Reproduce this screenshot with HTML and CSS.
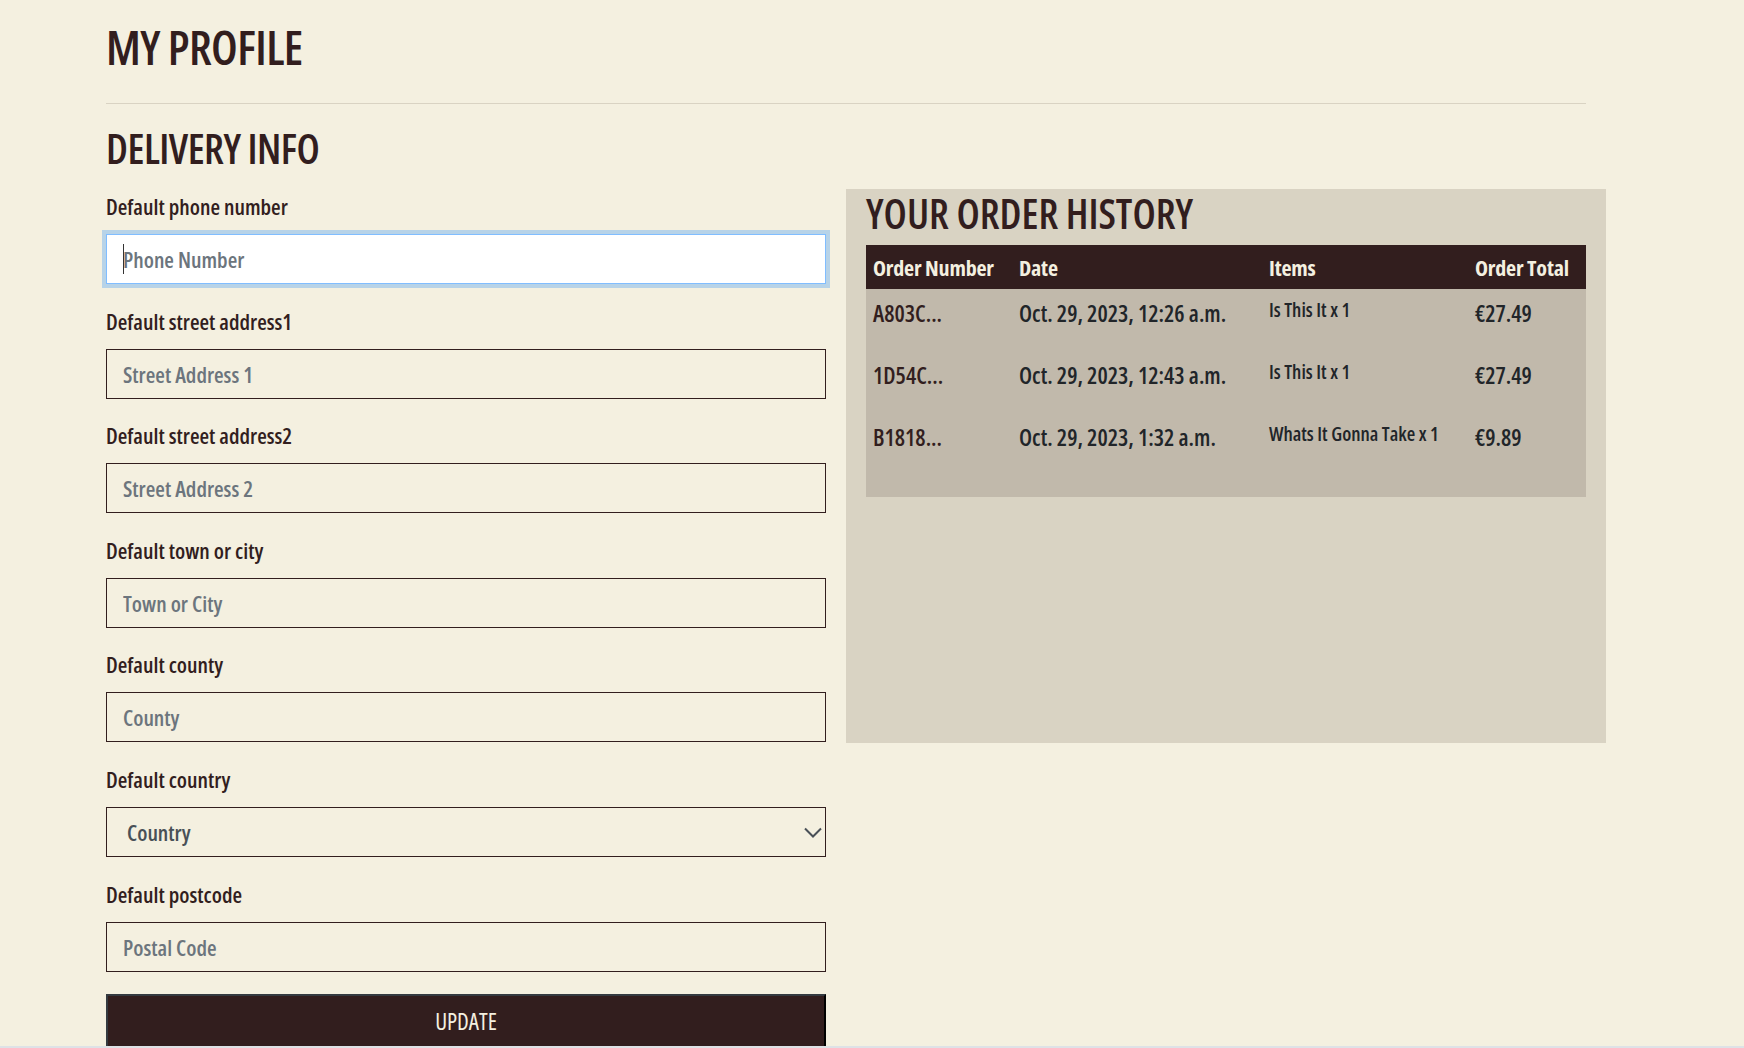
FILE: index.html
```html
<!DOCTYPE html>
<html lang="en">
<head>
<meta charset="utf-8">
<title>My Profile</title>
<link rel="stylesheet" href="styles.css">
</head>
<body>
<main class="page">
  <h1 class="title">MY PROFILE</h1>
  <hr class="rule">
  <h2 class="section-title">DELIVERY INFO</h2>
  <div class="row">
    <form class="delivery">
      <div class="field">
        <label class="label" for="phone">Default phone number</label>
        <div class="input-wrap">
          <input class="input is-focused" id="phone" placeholder="Phone Number">
          <span class="caret"></span>
        </div>
      </div>
      <div class="field">
        <label class="label" for="s1">Default street address1</label>
        <input class="input" id="s1" placeholder="Street Address 1">
      </div>
      <div class="field">
        <label class="label" for="s2">Default street address2</label>
        <input class="input" id="s2" placeholder="Street Address 2">
      </div>
      <div class="field">
        <label class="label" for="town">Default town or city</label>
        <input class="input" id="town" placeholder="Town or City">
      </div>
      <div class="field">
        <label class="label" for="county">Default county</label>
        <input class="input" id="county" placeholder="County">
      </div>
      <div class="field">
        <label class="label" for="country">Default country</label>
        <div class="input-wrap">
          <select class="input select" id="country"><option>Country</option></select>
          <svg class="chevron" width="18" height="11" viewBox="0 0 18 11"><path d="M1 1.5 L9 9.5 L17 1.5" fill="none" stroke="#495057" stroke-width="2"/></svg>
        </div>
      </div>
      <div class="field">
        <label class="label" for="post">Default postcode</label>
        <input class="input" id="post" placeholder="Postal Code">
      </div>
      <button class="btn" type="button">UPDATE</button>
    </form>
    <section class="orders-panel">
      <h2 class="orders-title">YOUR ORDER HISTORY</h2>
      <div class="orders-wrap">
        <table class="orders">
          <thead>
            <tr><th class="c1">Order Number</th><th class="c2">Date</th><th class="c3">Items</th><th class="c4">Order Total</th></tr>
          </thead>
          <tbody>
            <tr><td class="num">A803C...</td><td>Oct. 29, 2023, 12:26 a.m.</td><td class="items">Is This It x 1</td><td>€27.49</td></tr>
            <tr><td class="num">1D54C...</td><td>Oct. 29, 2023, 12:43 a.m.</td><td class="items">Is This It x 1</td><td>€27.49</td></tr>
            <tr><td class="num">B1818...</td><td>Oct. 29, 2023, 1:32 a.m.</td><td class="items">Whats It Gonna Take x 1</td><td>€9.89</td></tr>
          </tbody>
        </table>
      </div>
    </section>
  </div>
</main>
<footer class="footer"></footer>
</body>
</html>
```
FILE: styles.css
```css
* { box-sizing: border-box; }
html, body { margin: 0; padding: 0; }
body {
  background: #f4f0e0;
  color: #321e1e;
  font-family: "Open Sans", "Roboto Condensed", sans-serif;
  font-stretch: 75%;
  font-weight: 500;
  overflow: hidden;
}
.page { width: 1500px; padding-left: 106px; }
.title { margin: 17px 0 0; font-size: 47px; line-height: 60px; font-weight: 600; letter-spacing: -0.6px; }
.rule { margin: 26px 0 0; border: 0; border-top: 1px solid #d9d3c3; width: 1480px; height: 0; }
.section-title { margin: 18px 0 0; font-size: 41px; line-height: 52px; font-weight: 600; letter-spacing: -0.5px; }
.row { display: flex; gap: 20px; margin-top: 15px; align-items: flex-start; }
.delivery { width: 720px; padding-top: 4px; display: flex; flex-direction: column; }
.field { display: flex; flex-direction: column; margin-bottom: 23.6px; }
.label { font-size: 22px; line-height: 27px; font-weight: 600; margin-bottom: 14px; white-space: nowrap; }
.input-wrap { position: relative; }
.input {
  display: block; height: 50px; width: 720px; border: 1px solid #321e1e; border-radius: 0;
  background: transparent; padding: 0 16px; font-family: inherit; font-stretch: inherit;
  font-size: 22px; font-weight: 600; color: #495057; outline: none; margin: 0;
}
.input::placeholder { color: #6c757d; }
.input.is-focused { background: #fff; border-color: #80bdff; box-shadow: 0 0 0 4px rgba(0,123,255,.25); }
.caret { position: absolute; left: 17px; top: 10px; width: 1px; height: 30px; background: #333; }
.select { appearance: none; -webkit-appearance: none; padding-left: 20px; color: #495057; }
.chevron { position: absolute; right: 4px; top: 20px; pointer-events: none; }
.btn {
  display: block; height: 52px; width: 720px; margin-top: -1px; background: #321e1e; color: #f4f0e0;
  border: 2px solid #343a40; border-right-color: #000; border-bottom: 0; border-radius: 0;
  font-family: inherit; font-stretch: inherit; font-size: 23px; font-weight: 500;
}
.orders-panel { width: 760px; height: 554px; background: #d9d3c3; padding: 0 20px; flex: none; }
.orders-title { margin: 0; font-size: 41px; line-height: 48px; font-weight: 600; white-space: nowrap; }
.orders-wrap { margin-top: 8px; background: #c1b9ab; padding-bottom: 22px; }
.orders { width: 720px; border-collapse: collapse; table-layout: fixed; }
.orders th { background: #321e1e; color: #f4f0e0; height: 44px; text-align: left; padding: 0 7px; font-size: 22px; font-weight: 700; white-space: nowrap; letter-spacing: -0.2px; }
.c1 { width: 146px; } .c2 { width: 250px; } .c3 { width: 206px; } .c4 { width: 118px; }
.orders td { vertical-align: top; padding: 9px 7px 23px; font-size: 23px; line-height: 30px; color: #212529; height: 62px; white-space: nowrap; font-weight: 600; }
.orders td.num { color: #321e1e; }
.orders td.items { font-size: 19.5px; padding-top: 6px; }
.footer { border-top: 2px solid #dee2e6; height: 10px; }
```
